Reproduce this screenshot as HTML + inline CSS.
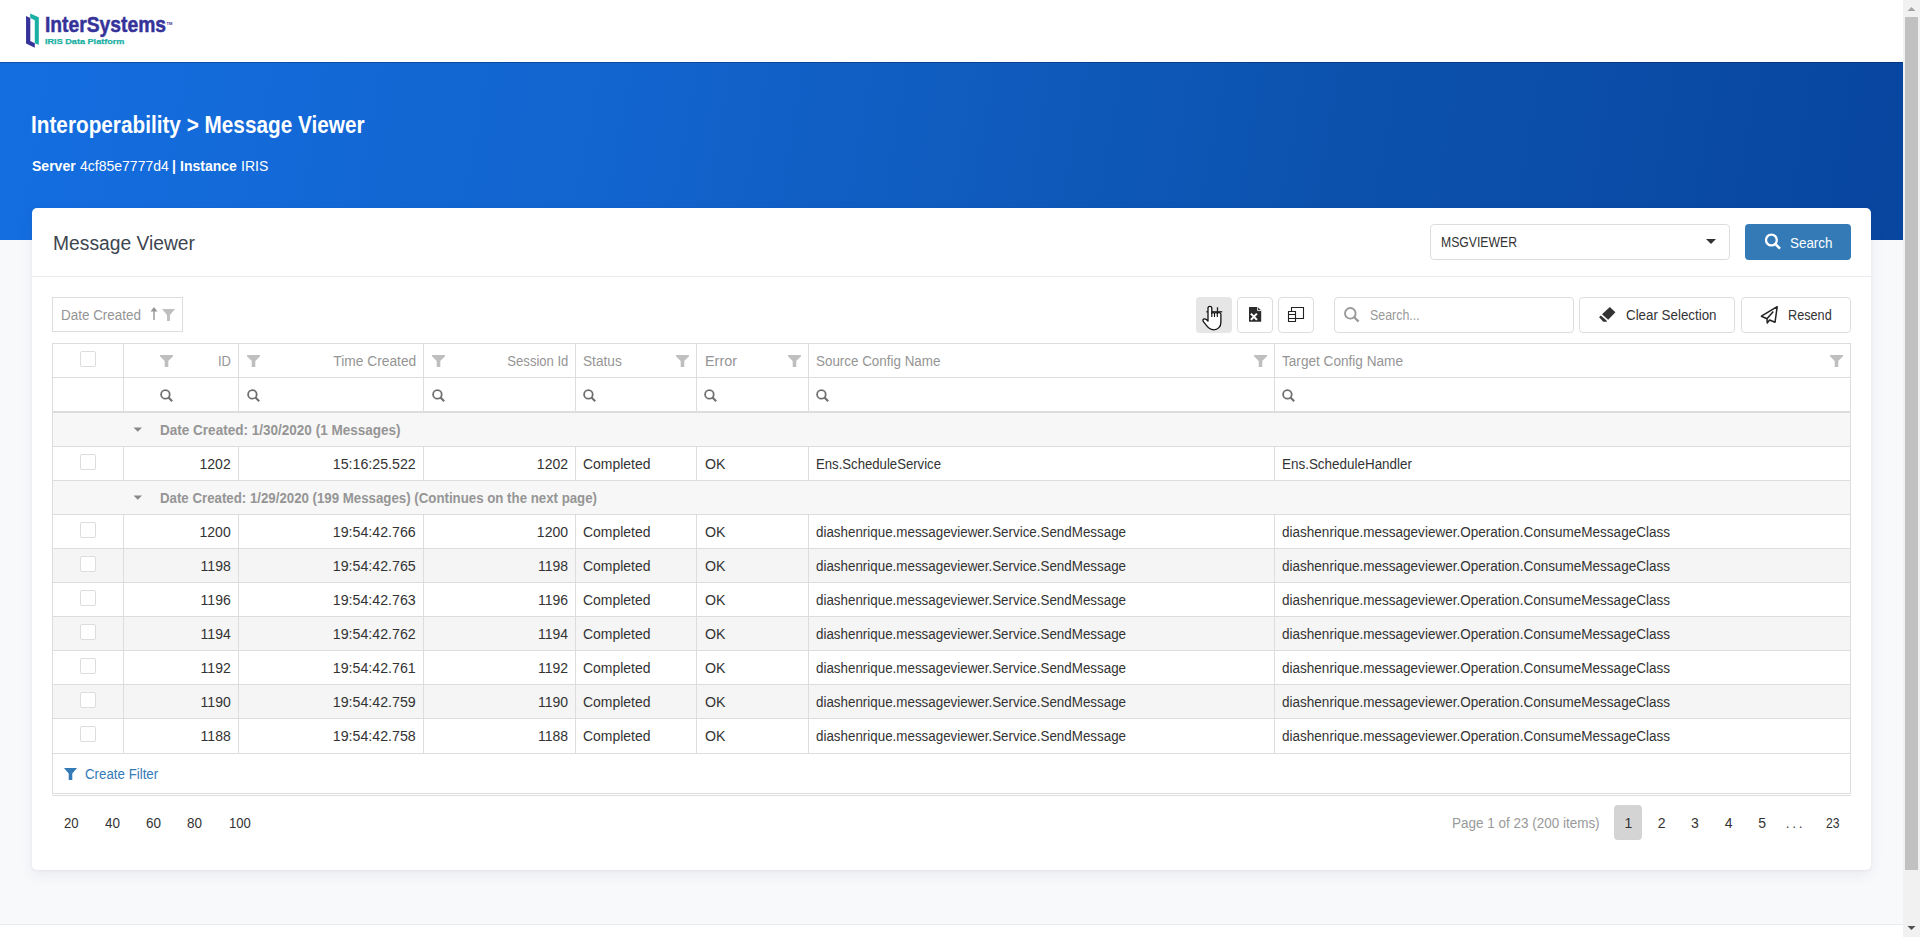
<!DOCTYPE html>
<html><head><meta charset="utf-8">
<style>
*{box-sizing:border-box}
html,body{margin:0;padding:0;width:1920px;height:937px;overflow:hidden}
body{font-family:"Liberation Sans",sans-serif;background:#f8f9fb;position:relative;color:#333}
.a{position:absolute}
.t{position:absolute;white-space:nowrap;line-height:1}
</style></head><body>

<div class="a" style="left:0px;top:0px;width:1903px;height:62px;background:#fff"></div>
<div class="a" style="left:0px;top:62px;width:1903px;height:178px;background:linear-gradient(100deg,#146ee0 0%,#1263cc 35%,#0c52ad 70%,#0846a0 100%)"></div>
<div class="a" style="left:0px;top:62px;width:1903px;height:1px;background:rgba(0,20,60,.35)"></div>
<div class="a" style="left:0px;top:924px;width:1903px;height:13px;background:#fff;border-top:1px solid #e9ecef"></div>
<svg class="a" style="left:20px;top:10px;" width="30" height="42" viewBox="0 0 30 42"><polygon fill="#1bb0a4" points="10.1,3.4 18.8,7.2 18.8,34.75 14.8,33.2 14.8,10.3 10.3,8.1"/><polygon fill="#35339a" points="6.05,6.05 10.3,8.1 10.3,30.9 14.8,33.2 14.8,37.7 6.05,33.6"/></svg>
<div class="t" style="left:44.70px;top:14.15px;font-size:22.5px;color:#35339a;font-weight:bold;transform:scaleX(0.8562);transform-origin:0 0;-webkit-text-stroke:0.5px #35339a;">InterSystems</div>
<div class="t" style="left:166.50px;top:21.61px;font-size:4px;color:#35339a;font-weight:bold;">TM</div>
<div class="t" style="left:44.70px;top:38.20px;font-size:7.8px;color:#1bb0a4;font-weight:bold;transform:scaleX(1.1683);transform-origin:0 0;-webkit-text-stroke:0.25px #1bb0a4;">IRIS Data Platform</div>
<div class="t" style="left:31.00px;top:112.78px;font-size:24px;color:#fff;font-weight:bold;transform:scaleX(0.8646);transform-origin:0 0;">Interoperability &gt; Message Viewer</div>
<div class="t" style="left:32.20px;top:158.30px;font-size:15px;color:#fff;font-weight:bold;transform:scaleX(0.9340);transform-origin:0 0;">Server </div>
<div class="t" style="left:79.71px;top:158.30px;font-size:15px;color:#fff;transform:scaleX(0.9340);transform-origin:0 0;">4cf85e7777d4 </div>
<div class="t" style="left:172.41px;top:158.30px;font-size:15px;color:#fff;font-weight:bold;transform:scaleX(0.9340);transform-origin:0 0;">| </div>
<div class="t" style="left:180.23px;top:158.30px;font-size:15px;color:#fff;font-weight:bold;transform:scaleX(0.9340);transform-origin:0 0;">Instance </div>
<div class="t" style="left:240.95px;top:158.30px;font-size:15px;color:#fff;transform:scaleX(0.9340);transform-origin:0 0;">IRIS</div>
<div class="a" style="left:32px;top:208px;width:1839px;height:662px;background:#fff;border-radius:5px;box-shadow:0 1px 3px rgba(50,50,93,.05),0 5px 14px rgba(50,50,93,.07)"></div>
<div class="t" style="left:52.90px;top:234.09px;font-size:19.5px;color:#3d4650;transform:scaleX(0.9875);transform-origin:0 0;">Message Viewer</div>
<div class="a" style="left:32px;top:276px;width:1839px;height:1px;background:#e9ecef"></div>
<div class="a" style="left:1430px;top:224px;width:300px;height:36px;border:1px solid #ddd;border-radius:4px;background:#fff"></div>
<div class="t" style="left:1440.60px;top:235.15px;font-size:14px;color:#333;transform:scaleX(0.8724);transform-origin:0 0;">MSGVIEWER</div>
<svg class="a" style="left:1706px;top:239px;" width="10" height="5" viewBox="0 0 10 5"><polygon fill="#333" points="0,0 10,0 5,5"/></svg>
<div class="a" style="left:1745px;top:224px;width:106px;height:36px;background:#337ab7;border-radius:4px"></div>
<svg class="a" style="left:1762px;top:231px;" width="22" height="22" viewBox="0 0 22 22"><circle cx="9.4" cy="9" r="5.4" fill="none" stroke="#fff" stroke-width="2.3"/><line x1="13.2" y1="12.8" x2="18" y2="17.6" stroke="#fff" stroke-width="2.6"/></svg>
<div class="t" style="left:1789.50px;top:235.65px;font-size:14px;color:#fff;transform:scaleX(0.9581);transform-origin:0 0;">Search</div>
<div class="a" style="left:52px;top:297px;width:131px;height:35px;border:1px solid #ddd;background:#fff"></div>
<div class="t" style="left:60.50px;top:308.45px;font-size:14px;color:#959595;transform:scaleX(0.9608);transform-origin:0 0;">Date Created</div>
<svg class="a" style="left:149px;top:307px;" width="10" height="14" viewBox="0 0 10 14"><line x1="5" y1="3" x2="5" y2="13" stroke="#959595" stroke-width="1.4"/><polygon fill="#959595" points="5,0 8.5,4.5 1.5,4.5"/></svg>
<svg class="a" style="left:162px;top:309px;" width="13" height="13" viewBox="0 0 13 13"><polygon fill="#bfbfbf" points="0,0 13,0 8,6 8,12 5,12 5,6"/></svg>
<div class="a" style="left:1196px;top:297px;width:36px;height:36px;background:#e6e6e6;border-radius:4px"></div>
<div class="a" style="left:1237px;top:297px;width:36px;height:36px;border:1px solid #ddd;border-radius:4px;background:#fff"></div>
<div class="a" style="left:1278px;top:297px;width:36px;height:36px;border:1px solid #ddd;border-radius:4px;background:#fff"></div>
<svg class="a" style="left:1248px;top:306px;" width="14" height="17" viewBox="0 0 14 17"><path fill="#2b2b2b" d="M1,1 H9.6 L13.2,4.6 V15.8 H1 Z"/><path d="M9.6,1.2 V4.6 H13" fill="none" stroke="#fff" stroke-width="0.9"/><path d="M2.9,7.6 L8.9,13.9 M8.9,7.6 L2.9,13.9" stroke="#fff" stroke-width="2.1"/></svg>
<svg class="a" style="left:1287px;top:306px;" width="18" height="17" viewBox="0 0 18 17"><path d="M4.5,5 V1.5 H16.5 V12.5 H9" fill="none" stroke="#222" stroke-width="1.1"/><path d="M1.5,5.5 H8.5 V15.5 H1.5 Z M1.5,8.5 H8.5 M1.5,12.5 H8.5" fill="none" stroke="#222" stroke-width="1.1"/></svg>
<svg class="a" style="left:1196px;top:297px;" width="36" height="36" viewBox="0 0 36 36"><line x1="10.4" y1="14.8" x2="26.2" y2="14.8" stroke="#222" stroke-width="1.3"/><line x1="21.5" y1="10.2" x2="21.5" y2="19" stroke="#222" stroke-width="1.3"/><path d="M12,23.2 V11.3 C12,8.6 15.8,8.6 15.8,11.3 V16.6 C15.8,15.2 18.5,15.2 18.5,16.6 C18.5,15.2 21.3,15.2 21.3,16.6 C21.3,15.2 24.9,15.2 24.9,17.2 V25.2 C24.9,29.6 22,32.8 17.6,32.8 C14.2,32.8 12.6,31.2 10.6,28.7 L7.4,24.7 C6.4,23.4 7,21.9 8.5,21.9 C9.8,21.9 10.9,22.8 12,24 Z" fill="#fff" stroke="#111" stroke-width="1.3" stroke-linejoin="round"/><path d="M15.8,16.6 V20 M18.5,16.6 V20 M21.3,16.6 V20" stroke="#111" stroke-width="1.1"/></svg>
<div class="a" style="left:1334px;top:297px;width:240px;height:36px;border:1px solid #ddd;border-radius:4px;background:#fff"></div>
<svg class="a" style="left:1342px;top:305px;" width="20" height="20" viewBox="0 0 20 20"><circle cx="8.3" cy="8.3" r="5.3" fill="none" stroke="#999" stroke-width="1.9"/><line x1="12" y1="12" x2="16.6" y2="16.6" stroke="#999" stroke-width="2.2"/></svg>
<div class="t" style="left:1369.60px;top:308.45px;font-size:14px;color:#999;transform:scaleX(0.8853);transform-origin:0 0;">Search...</div>
<div class="a" style="left:1579px;top:297px;width:156px;height:36px;border:1px solid #ddd;border-radius:4px;background:#fff"></div>
<svg class="a" style="left:1596px;top:304px;" width="22" height="20" viewBox="0 0 22 20"><polygon fill="#333" points="13.8,3 19.4,8.3 12.2,15.8 6,10.2"/><polygon fill="#333" points="4.8,11.4 11,17 10.6,17.8 7.3,17.8 3.1,13.3"/></svg>
<div class="t" style="left:1625.50px;top:308.45px;font-size:14px;color:#333;transform:scaleX(0.9533);transform-origin:0 0;">Clear Selection</div>
<div class="a" style="left:1741px;top:297px;width:110px;height:36px;border:1px solid #ddd;border-radius:4px;background:#fff"></div>
<svg class="a" style="left:1756px;top:303px;" width="26" height="24" viewBox="0 0 26 24"><path d="M21.2,3.7 L5.4,13.2 L11,15.7 L11.2,20 L13.6,17 L19,19.3 Z" fill="none" stroke="#222" stroke-width="1.5" stroke-linejoin="round"/><path d="M11,15.7 L17.3,8.4" stroke="#222" stroke-width="1.5"/></svg>
<div class="t" style="left:1787.60px;top:308.45px;font-size:14px;color:#333;transform:scaleX(0.9056);transform-origin:0 0;">Resend</div>
<div class="a" style="left:52px;top:343px;width:1799px;height:453px;background:#fff"></div>
<div class="a" style="left:52px;top:343px;width:1799px;height:1px;background:#ddd"></div>
<div class="a" style="left:80px;top:351px;width:16px;height:16px;border:1px solid #ddd;border-radius:2px;background:#fff"></div>
<svg class="a" style="left:160px;top:355px;" width="13" height="12" viewBox="0 0 13 12"><polygon fill="#bfbfbf" points="0,0 13,0 13,1.2 8.3,6 8.3,12 4.7,12 4.7,6 0,1.2"/></svg>
<div class="t" style="left:216.50px;top:354.15px;font-size:14px;color:#959595;transform:scaleX(0.9286);transform-origin:100% 0;">ID</div>
<svg class="a" style="left:246.5px;top:355px;" width="13" height="12" viewBox="0 0 13 12"><polygon fill="#bfbfbf" points="0,0 13,0 13,1.2 8.3,6 8.3,12 4.7,12 4.7,6 0,1.2"/></svg>
<div class="t" style="left:331.71px;top:354.15px;font-size:14px;color:#959595;transform:scaleX(0.9847);transform-origin:100% 0;">Time Created</div>
<svg class="a" style="left:431.5px;top:355px;" width="13" height="12" viewBox="0 0 13 12"><polygon fill="#bfbfbf" points="0,0 13,0 13,1.2 8.3,6 8.3,12 4.7,12 4.7,6 0,1.2"/></svg>
<div class="t" style="left:502.63px;top:354.15px;font-size:14px;color:#959595;transform:scaleX(0.9331);transform-origin:100% 0;">Session Id</div>
<div class="t" style="left:583.00px;top:354.15px;font-size:14px;color:#959595;transform:scaleX(0.9751);transform-origin:0 0;">Status</div>
<svg class="a" style="left:675.5px;top:355px;" width="13" height="12" viewBox="0 0 13 12"><polygon fill="#bfbfbf" points="0,0 13,0 13,1.2 8.3,6 8.3,12 4.7,12 4.7,6 0,1.2"/></svg>
<div class="t" style="left:704.70px;top:354.15px;font-size:14px;color:#959595;transform:scaleX(1.0286);transform-origin:0 0;">Error</div>
<svg class="a" style="left:787.5px;top:355px;" width="13" height="12" viewBox="0 0 13 12"><polygon fill="#bfbfbf" points="0,0 13,0 13,1.2 8.3,6 8.3,12 4.7,12 4.7,6 0,1.2"/></svg>
<div class="t" style="left:816.30px;top:354.15px;font-size:14px;color:#959595;transform:scaleX(0.9573);transform-origin:0 0;">Source Config Name</div>
<svg class="a" style="left:1253.5px;top:355px;" width="13" height="12" viewBox="0 0 13 12"><polygon fill="#bfbfbf" points="0,0 13,0 13,1.2 8.3,6 8.3,12 4.7,12 4.7,6 0,1.2"/></svg>
<div class="t" style="left:1282.00px;top:354.15px;font-size:14px;color:#959595;transform:scaleX(0.9719);transform-origin:0 0;">Target Config Name</div>
<svg class="a" style="left:1829.5px;top:355px;" width="13" height="12" viewBox="0 0 13 12"><polygon fill="#bfbfbf" points="0,0 13,0 13,1.2 8.3,6 8.3,12 4.7,12 4.7,6 0,1.2"/></svg>
<div class="a" style="left:52px;top:377px;width:1799px;height:1px;background:#ddd"></div>
<svg class="a" style="left:160px;top:389px;" width="14" height="14" viewBox="0 0 14 14"><circle cx="5.4" cy="5.4" r="4.3" fill="none" stroke="#6e6e6e" stroke-width="1.75"/><line x1="8.5" y1="8.5" x2="12.2" y2="12.2" stroke="#6e6e6e" stroke-width="2"/></svg>
<svg class="a" style="left:246.5px;top:389px;" width="14" height="14" viewBox="0 0 14 14"><circle cx="5.4" cy="5.4" r="4.3" fill="none" stroke="#6e6e6e" stroke-width="1.75"/><line x1="8.5" y1="8.5" x2="12.2" y2="12.2" stroke="#6e6e6e" stroke-width="2"/></svg>
<svg class="a" style="left:431.5px;top:389px;" width="14" height="14" viewBox="0 0 14 14"><circle cx="5.4" cy="5.4" r="4.3" fill="none" stroke="#6e6e6e" stroke-width="1.75"/><line x1="8.5" y1="8.5" x2="12.2" y2="12.2" stroke="#6e6e6e" stroke-width="2"/></svg>
<svg class="a" style="left:583px;top:389px;" width="14" height="14" viewBox="0 0 14 14"><circle cx="5.4" cy="5.4" r="4.3" fill="none" stroke="#6e6e6e" stroke-width="1.75"/><line x1="8.5" y1="8.5" x2="12.2" y2="12.2" stroke="#6e6e6e" stroke-width="2"/></svg>
<svg class="a" style="left:704px;top:389px;" width="14" height="14" viewBox="0 0 14 14"><circle cx="5.4" cy="5.4" r="4.3" fill="none" stroke="#6e6e6e" stroke-width="1.75"/><line x1="8.5" y1="8.5" x2="12.2" y2="12.2" stroke="#6e6e6e" stroke-width="2"/></svg>
<svg class="a" style="left:816px;top:389px;" width="14" height="14" viewBox="0 0 14 14"><circle cx="5.4" cy="5.4" r="4.3" fill="none" stroke="#6e6e6e" stroke-width="1.75"/><line x1="8.5" y1="8.5" x2="12.2" y2="12.2" stroke="#6e6e6e" stroke-width="2"/></svg>
<svg class="a" style="left:1282px;top:389px;" width="14" height="14" viewBox="0 0 14 14"><circle cx="5.4" cy="5.4" r="4.3" fill="none" stroke="#6e6e6e" stroke-width="1.75"/><line x1="8.5" y1="8.5" x2="12.2" y2="12.2" stroke="#6e6e6e" stroke-width="2"/></svg>
<div class="a" style="left:52px;top:411px;width:1799px;height:2px;background:#ddd"></div>
<div class="a" style="left:52px;top:343px;width:1px;height:68px;background:#ddd"></div>
<div class="a" style="left:123px;top:343px;width:1px;height:68px;background:#ddd"></div>
<div class="a" style="left:238px;top:343px;width:1px;height:68px;background:#ddd"></div>
<div class="a" style="left:423px;top:343px;width:1px;height:68px;background:#ddd"></div>
<div class="a" style="left:575px;top:343px;width:1px;height:68px;background:#ddd"></div>
<div class="a" style="left:696px;top:343px;width:1px;height:68px;background:#ddd"></div>
<div class="a" style="left:808px;top:343px;width:1px;height:68px;background:#ddd"></div>
<div class="a" style="left:1274px;top:343px;width:1px;height:68px;background:#ddd"></div>
<div class="a" style="left:1850px;top:343px;width:1px;height:68px;background:#ddd"></div>
<div class="a" style="left:52px;top:413px;width:1798px;height:33px;background:#f7f7f7"></div>
<svg class="a" style="left:133px;top:426.7px;" width="10" height="6" viewBox="0 0 10 6"><polygon fill="#888" points="0.5,0.5 9,0.5 4.75,4.8"/></svg>
<div class="t" style="left:160.40px;top:423.15px;font-size:14px;color:#959595;font-weight:bold;transform:scaleX(0.9662);transform-origin:0 0;">Date Created: 1/30/2020 (1 Messages)</div>
<div class="a" style="left:52px;top:446px;width:1799px;height:1px;background:#ddd"></div>
<div class="a" style="left:52px;top:413px;width:1px;height:33px;background:#ddd"></div>
<div class="a" style="left:1850px;top:413px;width:1px;height:33px;background:#ddd"></div>
<div class="a" style="left:80px;top:454px;width:16px;height:16px;border:1px solid #ddd;border-radius:2px;background:#fff"></div>
<div class="t" style="left:199.56px;top:457.15px;font-size:14px;color:#333;">1202</div>
<div class="t" style="left:334.26px;top:457.15px;font-size:14px;color:#333;transform:scaleX(1.0154);transform-origin:100% 0;">15:16:25.522</div>
<div class="t" style="left:536.86px;top:457.15px;font-size:14px;color:#333;">1202</div>
<div class="t" style="left:583.10px;top:457.15px;font-size:14px;color:#333;transform:scaleX(0.9970);transform-origin:0 0;">Completed</div>
<div class="t" style="left:704.50px;top:457.15px;font-size:14px;color:#333;transform:scaleX(1.0135);transform-origin:0 0;">OK</div>
<div class="t" style="left:816.30px;top:457.15px;font-size:14px;color:#333;transform:scaleX(0.9393);transform-origin:0 0;">Ens.ScheduleService</div>
<div class="t" style="left:1282.00px;top:457.15px;font-size:14px;color:#333;transform:scaleX(0.9600);transform-origin:0 0;">Ens.ScheduleHandler</div>
<div class="a" style="left:52px;top:447px;width:1px;height:33px;background:#ddd"></div>
<div class="a" style="left:123px;top:447px;width:1px;height:33px;background:#ddd"></div>
<div class="a" style="left:238px;top:447px;width:1px;height:33px;background:#ddd"></div>
<div class="a" style="left:423px;top:447px;width:1px;height:33px;background:#ddd"></div>
<div class="a" style="left:575px;top:447px;width:1px;height:33px;background:#ddd"></div>
<div class="a" style="left:696px;top:447px;width:1px;height:33px;background:#ddd"></div>
<div class="a" style="left:808px;top:447px;width:1px;height:33px;background:#ddd"></div>
<div class="a" style="left:1274px;top:447px;width:1px;height:33px;background:#ddd"></div>
<div class="a" style="left:1850px;top:447px;width:1px;height:33px;background:#ddd"></div>
<div class="a" style="left:52px;top:480px;width:1799px;height:1px;background:#ddd"></div>
<div class="a" style="left:52px;top:481px;width:1798px;height:33px;background:#f7f7f7"></div>
<svg class="a" style="left:133px;top:494.7px;" width="10" height="6" viewBox="0 0 10 6"><polygon fill="#888" points="0.5,0.5 9,0.5 4.75,4.8"/></svg>
<div class="t" style="left:160.40px;top:491.15px;font-size:14px;color:#959595;font-weight:bold;transform:scaleX(0.9472);transform-origin:0 0;">Date Created: 1/29/2020 (199 Messages) (Continues on the next page)</div>
<div class="a" style="left:52px;top:514px;width:1799px;height:1px;background:#ddd"></div>
<div class="a" style="left:52px;top:481px;width:1px;height:33px;background:#ddd"></div>
<div class="a" style="left:1850px;top:481px;width:1px;height:33px;background:#ddd"></div>
<div class="a" style="left:80px;top:522px;width:16px;height:16px;border:1px solid #ddd;border-radius:2px;background:#fff"></div>
<div class="t" style="left:199.56px;top:525.15px;font-size:14px;color:#333;">1200</div>
<div class="t" style="left:334.26px;top:525.15px;font-size:14px;color:#333;transform:scaleX(1.0154);transform-origin:100% 0;">19:54:42.766</div>
<div class="t" style="left:536.86px;top:525.15px;font-size:14px;color:#333;">1200</div>
<div class="t" style="left:583.10px;top:525.15px;font-size:14px;color:#333;transform:scaleX(0.9970);transform-origin:0 0;">Completed</div>
<div class="t" style="left:704.50px;top:525.15px;font-size:14px;color:#333;transform:scaleX(1.0135);transform-origin:0 0;">OK</div>
<div class="t" style="left:816.30px;top:525.15px;font-size:14px;color:#333;transform:scaleX(0.9553);transform-origin:0 0;">diashenrique.messageviewer.Service.SendMessage</div>
<div class="t" style="left:1282.00px;top:525.15px;font-size:14px;color:#333;transform:scaleX(0.9663);transform-origin:0 0;">diashenrique.messageviewer.Operation.ConsumeMessageClass</div>
<div class="a" style="left:52px;top:515px;width:1px;height:33px;background:#ddd"></div>
<div class="a" style="left:123px;top:515px;width:1px;height:33px;background:#ddd"></div>
<div class="a" style="left:238px;top:515px;width:1px;height:33px;background:#ddd"></div>
<div class="a" style="left:423px;top:515px;width:1px;height:33px;background:#ddd"></div>
<div class="a" style="left:575px;top:515px;width:1px;height:33px;background:#ddd"></div>
<div class="a" style="left:696px;top:515px;width:1px;height:33px;background:#ddd"></div>
<div class="a" style="left:808px;top:515px;width:1px;height:33px;background:#ddd"></div>
<div class="a" style="left:1274px;top:515px;width:1px;height:33px;background:#ddd"></div>
<div class="a" style="left:1850px;top:515px;width:1px;height:33px;background:#ddd"></div>
<div class="a" style="left:52px;top:548px;width:1799px;height:1px;background:#ddd"></div>
<div class="a" style="left:52px;top:549px;width:1798px;height:33px;background:#f5f5f5"></div>
<div class="a" style="left:80px;top:556px;width:16px;height:16px;border:1px solid #ddd;border-radius:2px;background:#fff"></div>
<div class="t" style="left:200.60px;top:559.15px;font-size:14px;color:#333;">1198</div>
<div class="t" style="left:334.26px;top:559.15px;font-size:14px;color:#333;transform:scaleX(1.0154);transform-origin:100% 0;">19:54:42.765</div>
<div class="t" style="left:537.90px;top:559.15px;font-size:14px;color:#333;">1198</div>
<div class="t" style="left:583.10px;top:559.15px;font-size:14px;color:#333;transform:scaleX(0.9970);transform-origin:0 0;">Completed</div>
<div class="t" style="left:704.50px;top:559.15px;font-size:14px;color:#333;transform:scaleX(1.0135);transform-origin:0 0;">OK</div>
<div class="t" style="left:816.30px;top:559.15px;font-size:14px;color:#333;transform:scaleX(0.9553);transform-origin:0 0;">diashenrique.messageviewer.Service.SendMessage</div>
<div class="t" style="left:1282.00px;top:559.15px;font-size:14px;color:#333;transform:scaleX(0.9663);transform-origin:0 0;">diashenrique.messageviewer.Operation.ConsumeMessageClass</div>
<div class="a" style="left:52px;top:549px;width:1px;height:33px;background:#ddd"></div>
<div class="a" style="left:123px;top:549px;width:1px;height:33px;background:#ddd"></div>
<div class="a" style="left:238px;top:549px;width:1px;height:33px;background:#ddd"></div>
<div class="a" style="left:423px;top:549px;width:1px;height:33px;background:#ddd"></div>
<div class="a" style="left:575px;top:549px;width:1px;height:33px;background:#ddd"></div>
<div class="a" style="left:696px;top:549px;width:1px;height:33px;background:#ddd"></div>
<div class="a" style="left:808px;top:549px;width:1px;height:33px;background:#ddd"></div>
<div class="a" style="left:1274px;top:549px;width:1px;height:33px;background:#ddd"></div>
<div class="a" style="left:1850px;top:549px;width:1px;height:33px;background:#ddd"></div>
<div class="a" style="left:52px;top:582px;width:1799px;height:1px;background:#ddd"></div>
<div class="a" style="left:80px;top:590px;width:16px;height:16px;border:1px solid #ddd;border-radius:2px;background:#fff"></div>
<div class="t" style="left:200.60px;top:593.15px;font-size:14px;color:#333;">1196</div>
<div class="t" style="left:334.26px;top:593.15px;font-size:14px;color:#333;transform:scaleX(1.0154);transform-origin:100% 0;">19:54:42.763</div>
<div class="t" style="left:537.90px;top:593.15px;font-size:14px;color:#333;">1196</div>
<div class="t" style="left:583.10px;top:593.15px;font-size:14px;color:#333;transform:scaleX(0.9970);transform-origin:0 0;">Completed</div>
<div class="t" style="left:704.50px;top:593.15px;font-size:14px;color:#333;transform:scaleX(1.0135);transform-origin:0 0;">OK</div>
<div class="t" style="left:816.30px;top:593.15px;font-size:14px;color:#333;transform:scaleX(0.9553);transform-origin:0 0;">diashenrique.messageviewer.Service.SendMessage</div>
<div class="t" style="left:1282.00px;top:593.15px;font-size:14px;color:#333;transform:scaleX(0.9663);transform-origin:0 0;">diashenrique.messageviewer.Operation.ConsumeMessageClass</div>
<div class="a" style="left:52px;top:583px;width:1px;height:33px;background:#ddd"></div>
<div class="a" style="left:123px;top:583px;width:1px;height:33px;background:#ddd"></div>
<div class="a" style="left:238px;top:583px;width:1px;height:33px;background:#ddd"></div>
<div class="a" style="left:423px;top:583px;width:1px;height:33px;background:#ddd"></div>
<div class="a" style="left:575px;top:583px;width:1px;height:33px;background:#ddd"></div>
<div class="a" style="left:696px;top:583px;width:1px;height:33px;background:#ddd"></div>
<div class="a" style="left:808px;top:583px;width:1px;height:33px;background:#ddd"></div>
<div class="a" style="left:1274px;top:583px;width:1px;height:33px;background:#ddd"></div>
<div class="a" style="left:1850px;top:583px;width:1px;height:33px;background:#ddd"></div>
<div class="a" style="left:52px;top:616px;width:1799px;height:1px;background:#ddd"></div>
<div class="a" style="left:52px;top:617px;width:1798px;height:33px;background:#f5f5f5"></div>
<div class="a" style="left:80px;top:624px;width:16px;height:16px;border:1px solid #ddd;border-radius:2px;background:#fff"></div>
<div class="t" style="left:200.60px;top:627.15px;font-size:14px;color:#333;">1194</div>
<div class="t" style="left:334.26px;top:627.15px;font-size:14px;color:#333;transform:scaleX(1.0154);transform-origin:100% 0;">19:54:42.762</div>
<div class="t" style="left:537.90px;top:627.15px;font-size:14px;color:#333;">1194</div>
<div class="t" style="left:583.10px;top:627.15px;font-size:14px;color:#333;transform:scaleX(0.9970);transform-origin:0 0;">Completed</div>
<div class="t" style="left:704.50px;top:627.15px;font-size:14px;color:#333;transform:scaleX(1.0135);transform-origin:0 0;">OK</div>
<div class="t" style="left:816.30px;top:627.15px;font-size:14px;color:#333;transform:scaleX(0.9553);transform-origin:0 0;">diashenrique.messageviewer.Service.SendMessage</div>
<div class="t" style="left:1282.00px;top:627.15px;font-size:14px;color:#333;transform:scaleX(0.9663);transform-origin:0 0;">diashenrique.messageviewer.Operation.ConsumeMessageClass</div>
<div class="a" style="left:52px;top:617px;width:1px;height:33px;background:#ddd"></div>
<div class="a" style="left:123px;top:617px;width:1px;height:33px;background:#ddd"></div>
<div class="a" style="left:238px;top:617px;width:1px;height:33px;background:#ddd"></div>
<div class="a" style="left:423px;top:617px;width:1px;height:33px;background:#ddd"></div>
<div class="a" style="left:575px;top:617px;width:1px;height:33px;background:#ddd"></div>
<div class="a" style="left:696px;top:617px;width:1px;height:33px;background:#ddd"></div>
<div class="a" style="left:808px;top:617px;width:1px;height:33px;background:#ddd"></div>
<div class="a" style="left:1274px;top:617px;width:1px;height:33px;background:#ddd"></div>
<div class="a" style="left:1850px;top:617px;width:1px;height:33px;background:#ddd"></div>
<div class="a" style="left:52px;top:650px;width:1799px;height:1px;background:#ddd"></div>
<div class="a" style="left:80px;top:658px;width:16px;height:16px;border:1px solid #ddd;border-radius:2px;background:#fff"></div>
<div class="t" style="left:200.60px;top:661.15px;font-size:14px;color:#333;">1192</div>
<div class="t" style="left:334.26px;top:661.15px;font-size:14px;color:#333;transform:scaleX(1.0154);transform-origin:100% 0;">19:54:42.761</div>
<div class="t" style="left:537.90px;top:661.15px;font-size:14px;color:#333;">1192</div>
<div class="t" style="left:583.10px;top:661.15px;font-size:14px;color:#333;transform:scaleX(0.9970);transform-origin:0 0;">Completed</div>
<div class="t" style="left:704.50px;top:661.15px;font-size:14px;color:#333;transform:scaleX(1.0135);transform-origin:0 0;">OK</div>
<div class="t" style="left:816.30px;top:661.15px;font-size:14px;color:#333;transform:scaleX(0.9553);transform-origin:0 0;">diashenrique.messageviewer.Service.SendMessage</div>
<div class="t" style="left:1282.00px;top:661.15px;font-size:14px;color:#333;transform:scaleX(0.9663);transform-origin:0 0;">diashenrique.messageviewer.Operation.ConsumeMessageClass</div>
<div class="a" style="left:52px;top:651px;width:1px;height:33px;background:#ddd"></div>
<div class="a" style="left:123px;top:651px;width:1px;height:33px;background:#ddd"></div>
<div class="a" style="left:238px;top:651px;width:1px;height:33px;background:#ddd"></div>
<div class="a" style="left:423px;top:651px;width:1px;height:33px;background:#ddd"></div>
<div class="a" style="left:575px;top:651px;width:1px;height:33px;background:#ddd"></div>
<div class="a" style="left:696px;top:651px;width:1px;height:33px;background:#ddd"></div>
<div class="a" style="left:808px;top:651px;width:1px;height:33px;background:#ddd"></div>
<div class="a" style="left:1274px;top:651px;width:1px;height:33px;background:#ddd"></div>
<div class="a" style="left:1850px;top:651px;width:1px;height:33px;background:#ddd"></div>
<div class="a" style="left:52px;top:684px;width:1799px;height:1px;background:#ddd"></div>
<div class="a" style="left:52px;top:685px;width:1798px;height:33px;background:#f5f5f5"></div>
<div class="a" style="left:80px;top:692px;width:16px;height:16px;border:1px solid #ddd;border-radius:2px;background:#fff"></div>
<div class="t" style="left:200.60px;top:695.15px;font-size:14px;color:#333;">1190</div>
<div class="t" style="left:334.26px;top:695.15px;font-size:14px;color:#333;transform:scaleX(1.0154);transform-origin:100% 0;">19:54:42.759</div>
<div class="t" style="left:537.90px;top:695.15px;font-size:14px;color:#333;">1190</div>
<div class="t" style="left:583.10px;top:695.15px;font-size:14px;color:#333;transform:scaleX(0.9970);transform-origin:0 0;">Completed</div>
<div class="t" style="left:704.50px;top:695.15px;font-size:14px;color:#333;transform:scaleX(1.0135);transform-origin:0 0;">OK</div>
<div class="t" style="left:816.30px;top:695.15px;font-size:14px;color:#333;transform:scaleX(0.9553);transform-origin:0 0;">diashenrique.messageviewer.Service.SendMessage</div>
<div class="t" style="left:1282.00px;top:695.15px;font-size:14px;color:#333;transform:scaleX(0.9663);transform-origin:0 0;">diashenrique.messageviewer.Operation.ConsumeMessageClass</div>
<div class="a" style="left:52px;top:685px;width:1px;height:33px;background:#ddd"></div>
<div class="a" style="left:123px;top:685px;width:1px;height:33px;background:#ddd"></div>
<div class="a" style="left:238px;top:685px;width:1px;height:33px;background:#ddd"></div>
<div class="a" style="left:423px;top:685px;width:1px;height:33px;background:#ddd"></div>
<div class="a" style="left:575px;top:685px;width:1px;height:33px;background:#ddd"></div>
<div class="a" style="left:696px;top:685px;width:1px;height:33px;background:#ddd"></div>
<div class="a" style="left:808px;top:685px;width:1px;height:33px;background:#ddd"></div>
<div class="a" style="left:1274px;top:685px;width:1px;height:33px;background:#ddd"></div>
<div class="a" style="left:1850px;top:685px;width:1px;height:33px;background:#ddd"></div>
<div class="a" style="left:52px;top:718px;width:1799px;height:1px;background:#ddd"></div>
<div class="a" style="left:80px;top:726px;width:16px;height:16px;border:1px solid #ddd;border-radius:2px;background:#fff"></div>
<div class="t" style="left:200.60px;top:729.15px;font-size:14px;color:#333;">1188</div>
<div class="t" style="left:334.26px;top:729.15px;font-size:14px;color:#333;transform:scaleX(1.0154);transform-origin:100% 0;">19:54:42.758</div>
<div class="t" style="left:537.90px;top:729.15px;font-size:14px;color:#333;">1188</div>
<div class="t" style="left:583.10px;top:729.15px;font-size:14px;color:#333;transform:scaleX(0.9970);transform-origin:0 0;">Completed</div>
<div class="t" style="left:704.50px;top:729.15px;font-size:14px;color:#333;transform:scaleX(1.0135);transform-origin:0 0;">OK</div>
<div class="t" style="left:816.30px;top:729.15px;font-size:14px;color:#333;transform:scaleX(0.9553);transform-origin:0 0;">diashenrique.messageviewer.Service.SendMessage</div>
<div class="t" style="left:1282.00px;top:729.15px;font-size:14px;color:#333;transform:scaleX(0.9663);transform-origin:0 0;">diashenrique.messageviewer.Operation.ConsumeMessageClass</div>
<div class="a" style="left:52px;top:719px;width:1px;height:34px;background:#ddd"></div>
<div class="a" style="left:123px;top:719px;width:1px;height:34px;background:#ddd"></div>
<div class="a" style="left:238px;top:719px;width:1px;height:34px;background:#ddd"></div>
<div class="a" style="left:423px;top:719px;width:1px;height:34px;background:#ddd"></div>
<div class="a" style="left:575px;top:719px;width:1px;height:34px;background:#ddd"></div>
<div class="a" style="left:696px;top:719px;width:1px;height:34px;background:#ddd"></div>
<div class="a" style="left:808px;top:719px;width:1px;height:34px;background:#ddd"></div>
<div class="a" style="left:1274px;top:719px;width:1px;height:34px;background:#ddd"></div>
<div class="a" style="left:1850px;top:719px;width:1px;height:34px;background:#ddd"></div>
<div class="a" style="left:52px;top:753px;width:1799px;height:1px;background:#ddd"></div>
<div class="a" style="left:52px;top:754px;width:1px;height:39px;background:#ddd"></div>
<div class="a" style="left:1850px;top:754px;width:1px;height:39px;background:#ddd"></div>
<div class="a" style="left:52px;top:793px;width:1799px;height:1px;background:#ddd"></div>
<div class="a" style="left:52px;top:795px;width:1799px;height:1px;background:#ddd"></div>
<svg class="a" style="left:63.5px;top:768px;" width="13" height="12" viewBox="0 0 13 12"><polygon fill="#337ab7" points="0,0 13,0 8.3,5.6 8.3,12 4.7,12 4.7,5.6"/></svg>
<div class="t" style="left:84.60px;top:767.15px;font-size:14px;color:#337ab7;transform:scaleX(0.9504);transform-origin:0 0;">Create Filter</div>
<div class="t" style="left:64.40px;top:816.15px;font-size:14px;color:#333;transform:scaleX(0.9376);transform-origin:0 0;">20</div>
<div class="t" style="left:105.00px;top:816.15px;font-size:14px;color:#333;transform:scaleX(0.9633);transform-origin:0 0;">40</div>
<div class="t" style="left:146.30px;top:816.15px;font-size:14px;color:#333;transform:scaleX(0.9633);transform-origin:0 0;">60</div>
<div class="t" style="left:187.30px;top:816.15px;font-size:14px;color:#333;transform:scaleX(0.9633);transform-origin:0 0;">80</div>
<div class="t" style="left:229.00px;top:816.15px;font-size:14px;color:#333;transform:scaleX(0.9333);transform-origin:0 0;">100</div>
<div class="t" style="left:1452.30px;top:816.15px;font-size:14px;color:#999;transform:scaleX(0.9628);transform-origin:0 0;">Page 1 of 23 (200 items)</div>
<div class="a" style="left:1614px;top:805px;width:28px;height:35px;background:#d4d4d4;border-radius:4px"></div>
<div class="t" style="left:1624.51px;top:816.15px;font-size:14px;color:#333;">1</div>
<div class="t" style="left:1657.71px;top:816.15px;font-size:14px;color:#333;">2</div>
<div class="t" style="left:1690.91px;top:816.15px;font-size:14px;color:#333;">3</div>
<div class="t" style="left:1724.71px;top:816.15px;font-size:14px;color:#333;">4</div>
<div class="t" style="left:1758.31px;top:816.15px;font-size:14px;color:#333;">5</div>
<div class="t" style="left:1785.50px;top:816.15px;font-size:14px;color:#333;transform:scaleX(0.8382);transform-origin:0 0;">. . .</div>
<div class="t" style="left:1825.50px;top:816.15px;font-size:14px;color:#333;transform:scaleX(0.8669);transform-origin:0 0;">23</div>
<div class="a" style="left:1903px;top:0px;width:17px;height:937px;background:#f1f1f1"></div>
<div class="a" style="left:1905px;top:17px;width:13px;height:853px;background:#c1c1c1"></div>
<svg class="a" style="left:1903px;top:0px;" width="17" height="17" viewBox="0 0 17 17"><polygon fill="#a3a3a3" points="4.5,11 12.5,11 8.5,7"/></svg>
<svg class="a" style="left:1903px;top:920px;" width="17" height="17" viewBox="0 0 17 17"><polygon fill="#505050" points="4.5,6 12.5,6 8.5,10"/></svg>
</body></html>
